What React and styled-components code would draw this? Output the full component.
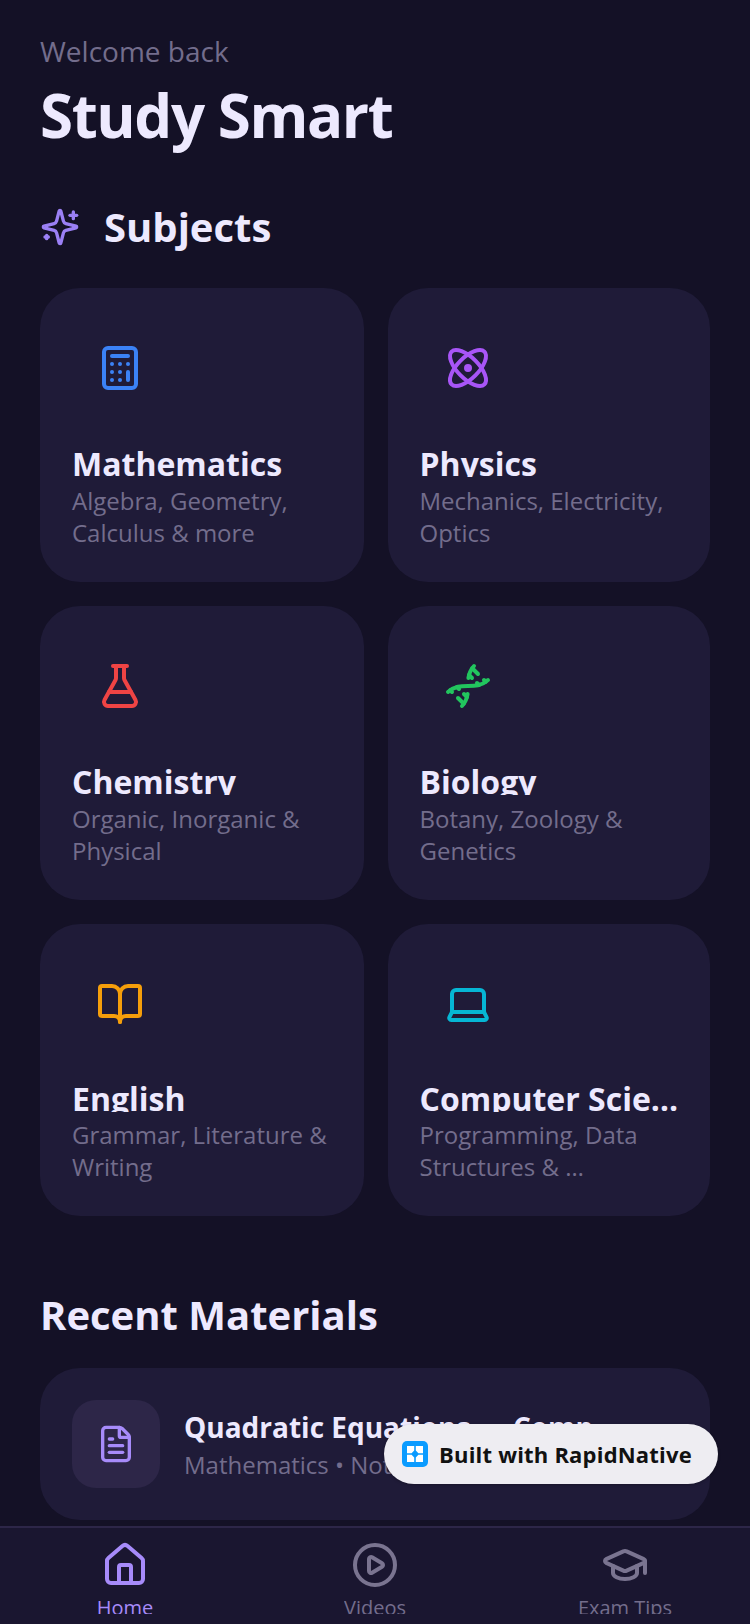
import React from 'react';
import styled, { createGlobalStyle } from 'styled-components';
import {
  Atom,
  BookOpen,
  Calculator,
  CirclePlay,
  Dna,
  FileText,
  FlaskConical,
  GraduationCap,
  House,
  Laptop,
} from 'lucide-react';

const subjects = [
  { name: 'Mathematics', desc: 'Algebra, Geometry, Calculus & more', Icon: Calculator, color: '#3b82f6' },
  { name: 'Physics', desc: 'Mechanics, Electricity, Optics', Icon: Atom, color: '#a855f7' },
  { name: 'Chemistry', desc: 'Organic, Inorganic & Physical', Icon: FlaskConical, color: '#ef4444' },
  { name: 'Biology', desc: 'Botany, Zoology & Genetics', Icon: Dna, color: '#22c55e' },
  { name: 'English', desc: 'Grammar, Literature & Writing', Icon: BookOpen, color: '#f59e0b', tight: true },
  { name: 'Computer Scie…', desc: 'Programming, Data Structures & …', Icon: Laptop, color: '#06b6d4', tight: true },
];

const tabs = [
  { label: 'Home', Icon: House, active: true },
  { label: 'Videos', Icon: CirclePlay },
  { label: 'Exam Tips', Icon: GraduationCap },
];

const StarIcon = () => (
  <svg width="40" height="40" viewBox="0 0 24 24" fill="none" stroke="#9b80f5" strokeWidth="2" strokeLinecap="round" strokeLinejoin="round">
    <path d="M9.937 15.5A2 2 0 0 0 8.5 14.063l-6.135-1.582a.5.5 0 0 1 0-.962L8.5 9.936A2 2 0 0 0 9.937 8.5l1.582-6.135a.5.5 0 0 1 .963 0L14.063 8.5A2 2 0 0 0 15.5 9.937l6.135 1.581a.5.5 0 0 1 0 .964L15.5 14.063a2 2 0 0 0-1.437 1.437l-1.582 6.135a.5.5 0 0 1-.963 0z" />
    <path d="M20 3v4" />
    <path d="M22 5h-4" />
    <path d="M4 17v2" />
    <path d="M5 18H3" />
  </svg>
);

const App = () => {
  return (
    <Screen>
      <GlobalStyle />
      <Scroll>
        <Welcome>Welcome back</Welcome>
        <Title>Study Smart</Title>
        <SectionHead>
          <StarIcon />
          <SectionTitle>Subjects</SectionTitle>
        </SectionHead>
        <Grid>
          {subjects.map(({ name, desc, Icon, color, tight }) => (
            <Card key={name} $tight={tight}>
              <IconBox>
                <Icon size={48} color={color} strokeWidth={2} />
              </IconBox>
              <CardTitle $tight={tight}>{name}</CardTitle>
              <CardDesc $tight={tight}>{desc}</CardDesc>
            </Card>
          ))}
        </Grid>
        <RecentTitle>Recent Materials</RecentTitle>
        <Material>
          <MaterialIcon>
            <FileText size={40} color="#a78bfa" strokeWidth={2} />
          </MaterialIcon>
          <MaterialText>
            <MaterialTitle>Quadratic Equations — Comp…</MaterialTitle>
            <MaterialMeta>Mathematics • Notes</MaterialMeta>
          </MaterialText>
        </Material>
      </Scroll>
      <TabBar>
        {tabs.map(({ label, Icon, active }) => (
          <Tab key={label}>
            <Icon size={48} color={active ? '#a78bfa' : '#7a7490'} strokeWidth={2} />
            <TabLabel $active={active}>{label}</TabLabel>
          </Tab>
        ))}
      </TabBar>
      <Badge>
        <BadgeLogo viewBox="0 0 26 26">
          <rect width="26" height="26" rx="5" fill="#0a9bff" />
          <path d="M5 5h7.2v4.6L9.6 12.2H5zM13.8 5H21v7.2h-4.6l-2.6-2.6zM5 13.8h4.6l2.6 2.6V21H5zM16.4 13.8H21V21h-7.2v-4.6z" fill="#fff" />
        </BadgeLogo>
        <BadgeText>Built with RapidNative</BadgeText>
      </Badge>
    </Screen>
  );
};

export default App;

/* Styled Components */

const GlobalStyle = createGlobalStyle`
  html, body {
    margin: 0;
    padding: 0;
    background: #141126;
  }
`;

const Screen = styled.div`
  position: relative;
  display: flex;
  flex-direction: column;
  width: 750px;
  height: 1624px;
  overflow: hidden;
  background: #141126;
  font-family: "Open Sans", sans-serif;
`;

const Scroll = styled.div`
  flex: 1;
  min-height: 0;
  overflow: hidden;
  padding: 31px 40px 0;
`;

const Welcome = styled.div`
  font-size: 28px;
  line-height: 40px;
  color: #736d8c;
`;

const Title = styled.h1`
  margin: 8px 0 0;
  font-size: 60px;
  line-height: 72px;
  font-weight: 700;
  letter-spacing: -1.4px;
  color: #ede9fe;
`;

const SectionHead = styled.div`
  display: flex;
  align-items: center;
  gap: 24px;
  margin: 50px 0 35px;
`;

const SectionTitle = styled.h2`
  margin: 0;
  font-size: 40px;
  line-height: 52px;
  font-weight: 700;
  color: #ede9fe;
`;

const Grid = styled.div`
  display: grid;
  grid-template-columns: 323.5px 322.5px;
  gap: 24px;
`;

const Card = styled.div`
  min-width: 0;
  padding: 32px 32px 33px;
  border-radius: 40px;
  background: #1f1b38;
`;

const IconBox = styled.div`
  display: flex;
  align-items: center;
  justify-content: center;
  width: 96px;
  height: 96px;
`;

const CardTitle = styled.div`
  margin-top: ${(p) => (p.$tight ? '33px' : '34px')};
  font-size: 32px;
  line-height: 27px;
  font-weight: 700;
  color: #ede9fe;
  white-space: nowrap;
  overflow: hidden;
`;

const CardDesc = styled.div`
  margin-top: ${(p) => (p.$tight ? '7px' : '8px')};
  font-size: 24px;
  line-height: 32px;
  color: #736d8c;
`;

const RecentTitle = styled.h2`
  margin: 73px 0 27px;
  font-size: 40px;
  line-height: 52px;
  font-weight: 700;
  color: #ede9fe;
`;

const Material = styled.div`
  display: flex;
  align-items: center;
  gap: 24px;
  height: 152px;
  padding: 0 32px;
  box-sizing: border-box;
  border-radius: 40px;
  background: #1f1b38;
`;

const MaterialIcon = styled.div`
  display: flex;
  align-items: center;
  justify-content: center;
  flex: none;
  width: 88px;
  height: 88px;
  border-radius: 24px;
  background: #2d2648;
`;

const MaterialText = styled.div`
  padding-top: 2px;
`;

const MaterialTitle = styled.div`
  font-size: 28px;
  line-height: 38px;
  font-weight: 700;
  color: #ede9fe;
  white-space: nowrap;
`;

const MaterialMeta = styled.div`
  margin-top: 2px;
  font-size: 24px;
  line-height: 34px;
  color: #736d8c;
`;

const TabBar = styled.div`
  display: grid;
  grid-template-columns: repeat(3, 1fr);
  flex: none;
  height: 98px;
  box-sizing: border-box;
  padding-top: 13px;
  border-top: 2px solid #2d2648;
  background: #1a1630;
`;

const Tab = styled.div`
  display: flex;
  flex-direction: column;
  align-items: center;
`;

const TabLabel = styled.div`
  margin-top: 8px;
  font-size: 20px;
  line-height: 22px;
  height: 17px;
  overflow: hidden;
  color: ${(p) => (p.$active ? '#a78bfa' : '#736d8c')};
`;

const Badge = styled.div`
  position: absolute;
  left: 384px;
  top: 1424px;
  display: flex;
  align-items: center;
  gap: 11px;
  width: 334px;
  height: 60px;
  box-sizing: border-box;
  padding-left: 18px;
  border-radius: 30px;
  background: #eeedf2;
  box-shadow: 0 1px 3px rgba(0, 0, 0, 0.25);
`;

const BadgeLogo = styled.svg`
  flex: none;
  width: 26px;
  height: 26px;
`;

const BadgeText = styled.span`
  font-size: 22px;
  font-weight: 700;
  letter-spacing: 0.2px;
  color: #111111;
  white-space: nowrap;
`;
